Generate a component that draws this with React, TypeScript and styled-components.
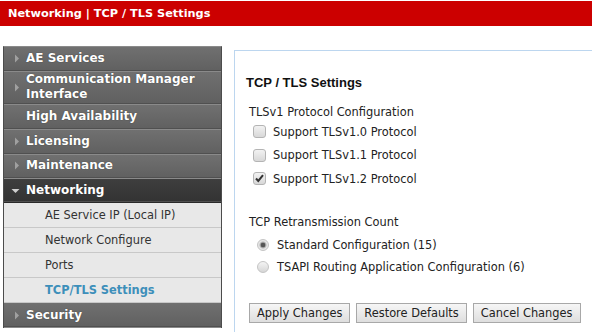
import styled, { createGlobalStyle } from "styled-components";

const GlobalStyle = createGlobalStyle`
  body {
    margin: 0;
    background: #fff;
    font-family: "DejaVu Sans", Verdana, sans-serif;
  }
`;

type NavItem = {
  label: string;
  arrow: "right" | "down" | "none";
  open?: boolean;
  h: number;
};

const navTop: NavItem[] = [
  { label: "AE Services", arrow: "right", h: 25 },
  { label: "Communication Manager Interface", arrow: "right", h: 33 },
  { label: "High Availability", arrow: "none", h: 25 },
  { label: "Licensing", arrow: "right", h: 25 },
  { label: "Maintenance", arrow: "right", h: 24 },
  { label: "Networking", arrow: "down", open: true, h: 24 },
];

const subItems = [
  "AE Service IP (Local IP)",
  "Network Configure",
  "Ports",
  "TCP/TLS Settings",
];

const Arrow = ({ dir }: { dir: "right" | "down" | "none" }) => {
  if (dir === "none") return <ArrowBox />;
  return (
    <ArrowBox>
      {dir === "right" ? (
        <svg width="6" height="9" viewBox="0 0 6 9">
          <path d="M1 0.5 L5 4.5 L1 8.5 Z" fill="#a0a0a0" />
        </svg>
      ) : (
        <svg width="9" height="6" viewBox="0 0 9 6">
          <path d="M0.5 1 L8.5 1 L4.5 5 Z" fill="#cfcfcf" />
        </svg>
      )}
    </ArrowBox>
  );
};

const App = () => {
  return (
    <>
      <GlobalStyle />
      <Header>Networking | TCP / TLS Settings</Header>
      <Body>
        <Sidebar>
          {navTop.map((item) => (
            <NavRow key={item.label} $open={item.open} $h={item.h}>
              <Arrow dir={item.arrow} />
              <NavLabel>{item.label}</NavLabel>
            </NavRow>
          ))}
          {subItems.map((s) => (
            <SubRow key={s} $active={s === "TCP/TLS Settings"}>
              {s}
            </SubRow>
          ))}
          <NavRow $h={25} $centered>
            <Arrow dir="right" />
            <NavLabel>Security</NavLabel>
          </NavRow>
        </Sidebar>
        <Panel>
          <Title>TCP / TLS Settings</Title>
          <Section>
            <SectionLabel>TLSv1 Protocol Configuration</SectionLabel>
            <Options>
              <CheckRow>
                <Box />
                Support TLSv1.0 Protocol
              </CheckRow>
              <CheckRow>
                <Box />
                Support TLSv1.1 Protocol
              </CheckRow>
              <CheckRow>
                <Box>
                  <svg width="11" height="11" viewBox="0 0 11 11">
                    <path
                      d="M2 5.5 L4.3 8 L9 2.2"
                      fill="none"
                      stroke="#333"
                      strokeWidth="2"
                    />
                  </svg>
                </Box>
                Support TLSv1.2 Protocol
              </CheckRow>
            </Options>
          </Section>
          <Section $gap={29}>
            <SectionLabel>TCP Retransmission Count</SectionLabel>
            <RadioList>
              <RadioRow>
                <Radio $checked />
                Standard Configuration (15)
              </RadioRow>
              <RadioRow>
                <Radio />
                TSAPI Routing Application Configuration (6)
              </RadioRow>
            </RadioList>
          </Section>
          <Buttons>
            <Button>Apply Changes</Button>
            <Button>Restore Defaults</Button>
            <Button>Cancel Changes</Button>
          </Buttons>
        </Panel>
      </Body>
    </>
  );
};

const Header = styled.div`
  height: 25px;
  margin-top: 1px;
  background: #cc0000;
  color: #fff;
  font-weight: bold;
  font-size: 11.3px;
  line-height: 25px;
  padding-left: 8px;
`;

const Body = styled.div`
  display: flex;
  align-items: flex-start;
`;

const Sidebar = styled.div`
  margin: 20px 0 0 3px;
  width: 219px;
  border-top: 1px solid #8a8a8a;
  border-left: 1px solid #4c4c4c;
  border-right: 1px solid #4c4c4c;
  box-sizing: border-box;
`;

const NavRow = styled.div<{ $open?: boolean; $h: number; $centered?: boolean }>`
  display: flex;
  align-items: center;
  height: ${(p) => p.$h}px;
  padding-bottom: ${(p) => (p.$open || p.$centered ? 0 : 2)}px;
  box-sizing: border-box;
  background: ${(p) =>
    p.$open
      ? "linear-gradient(#3e3e3e, #333)"
      : "linear-gradient(#707070, #606060)"};
  border-bottom: 1px solid ${(p) => (p.$open ? "#2a2a2a" : "#8a8a8a")};
  box-shadow: inset 0 -1px 0 #505050;
  color: #fff;
  font-weight: bold;
  font-size: 12px;
  line-height: 15px;
  text-shadow: 0 0 1px #333;
`;

const ArrowBox = styled.span`
  width: 22px;
  display: flex;
  justify-content: flex-end;
  padding-right: 6px;
  box-sizing: border-box;
  flex-shrink: 0;
`;

const NavLabel = styled.span`
  padding-right: 10px;
`;

const SubRow = styled.div<{ $active?: boolean }>`
  height: 24px;
  line-height: 25px;
  padding-left: 41px;
  background: #e8e8e8;
  border-bottom: 1px solid #c8c8c8;
  color: ${(p) => (p.$active ? "#3d8fba" : "#333")};
  font-weight: ${(p) => (p.$active ? "bold" : "normal")};
  font-size: 11.4px;
`;

const Panel = styled.div`
  margin: 24px 0 0 12px;
  flex: 1;
  height: 282px;
  border: 1px solid #bcd6ef;
  border-right: none;
  border-bottom: none;
  padding: 24px 0 0 11px;
  box-sizing: border-box;
`;

const Title = styled.h2`
  margin: 0 0 15px;
  font-family: "Liberation Sans", Arial, sans-serif;
  font-size: 13px;
  font-weight: bold;
  color: #111;
`;

const Section = styled.div<{ $gap?: number }>`
  margin-top: ${(p) => p.$gap ?? 0}px;
  padding-left: 3px;
`;

const SectionLabel = styled.div`
  font-size: 11.4px;
  color: #222;
  line-height: 14px;
`;

const Options = styled.div`
  display: flex;
  flex-direction: column;
  gap: 9.5px;
  margin-top: 5.5px;
  padding-left: 4px;
`;

const CheckRow = styled.label`
  display: flex;
  align-items: center;
  gap: 7px;
  font-size: 11.4px;
  color: #222;
  height: 14px;
`;

const Box = styled.span`
  width: 13px;
  height: 13px;
  box-sizing: border-box;
  border: 1px solid #b4b4b4;
  border-radius: 3px;
  background: linear-gradient(#f2f2f2, #d8d8d8);
  display: flex;
  align-items: center;
  justify-content: center;
`;

const RadioList = styled.div`
  display: flex;
  flex-direction: column;
  gap: 8px;
  margin-top: 9px;
  padding-left: 8px;
`;

const RadioRow = styled.label`
  display: flex;
  align-items: center;
  gap: 8px;
  font-size: 11.4px;
  color: #222;
  height: 14px;
`;

const Radio = styled.span<{ $checked?: boolean }>`
  width: 12px;
  height: 12px;
  box-sizing: border-box;
  border-radius: 50%;
  border: 1px solid #c4c4c4;
  background: ${(p) =>
    p.$checked
      ? "radial-gradient(circle, #555 0 2px, #9a9a9a 2.5px, #e6e6e6 4px)"
      : "linear-gradient(#f4f4f4, #d6d6d6)"};
`;

const Buttons = styled.div`
  display: flex;
  gap: 6px;
  margin-top: 29px;
  padding-left: 3px;
`;

const Button = styled.button`
  font-family: "DejaVu Sans", Verdana, sans-serif;
  font-size: 11.4px;
  color: #222;
  height: 20px;
  padding: 0 7px;
  white-space: nowrap;
  border: 1px solid #a8a8a8;
  border-radius: 0;
  background: linear-gradient(#f6f6f6, #dedede);
`;

export default App;
